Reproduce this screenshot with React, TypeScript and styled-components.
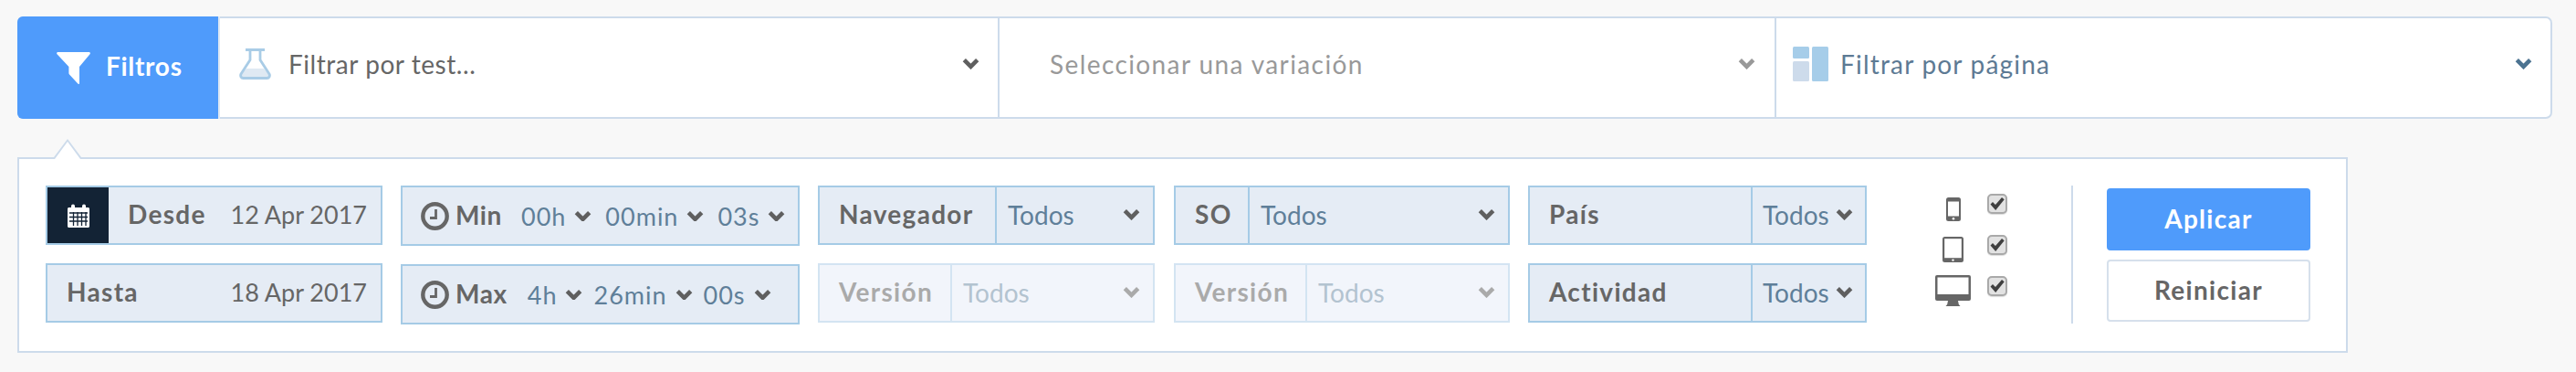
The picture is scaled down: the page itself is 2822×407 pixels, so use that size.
import styled, { createGlobalStyle } from 'styled-components';

const GlobalStyle = createGlobalStyle`
  html, body {
    margin: 0;
    background: #f8f8f8;
    font-family: Lato, "Open Sans", sans-serif;
  }
`;

const Chevron = ({ color = '#5f5f5f', size = 19 }: { color?: string; size?: number }) => (
  <svg width={size} height={size * 0.68} viewBox="0 0 18 12" fill="none" style={{ flexShrink: 0 }}>
    <path d="M2.200 2.400 9 9.200l6.800-6.800" stroke={color} strokeWidth="4.400" />
  </svg>
);

const FilterIcon = () => (
  <svg width="37" height="35" viewBox="0 0 37 35" fill="#fff">
    <path d="M1.500 0h34c1.200 0 1.800 1.300 1 2.200L25 16v18c0 1-1 1.400-1.700.600L14 24.500c-.4-.4-.6-.9-.6-1.400V16L.5 2.200C-.3 1.300.3 0 1.500 0z" />
  </svg>
);

const FlaskIcon = () => (
  <svg width="35" height="34" viewBox="0 0 35 34" fill="none">
    <path d="M8 22h19l6 7c.7 2-.3 4-2 4H3.500c-1.700 0-2.700-2-2-4z" fill="#dfe9f3" />
    <path d="M7 1.500h21M12 2v10.500L2 28c-1 2 0 4.500 2.500 4.500h26c2.500 0 3.500-2.500 2.500-4.500L23 12.500V2" stroke="#a9cce6" strokeWidth="2.800" />
  </svg>
);

const PagesIcon = () => (
  <svg width="39" height="38" viewBox="0 0 39 38">
    <rect x="0" y="0" width="18" height="13" rx="1.500" fill="#a6cde9" />
    <rect x="0" y="16" width="18" height="22" rx="1.500" fill="#cddbeb" />
    <rect x="21" y="0" width="18" height="38" rx="1.500" fill="#a6cde9" />
  </svg>
);

const CalendarIcon = () => (
  <svg width="24" height="26" viewBox="0 0 24 26" fill="#fff">
    <path d="M1.500 4H4V2.500a2 2 0 0 1 4 0V4h8V2.500a2 2 0 0 1 4 0V4h2.500C23.300 4 24 4.700 24 5.500v19c0 .8-.7 1.500-1.500 1.500h-21C.7 26 0 25.300 0 24.500v-19C0 4.700.7 4 1.500 4z" />
    <path d="M2 10h20M2 14.500h20M2 19h20M6.500 9v15M11 9v15M15.500 9v15M20 9v15" stroke="#132335" strokeWidth="1.300" />
  </svg>
);

const ClockIcon = () => (
  <svg width="31" height="31" viewBox="0 0 31 31" fill="none" style={{ flexShrink: 0 }}>
    <circle cx="15.500" cy="15.500" r="13.200" stroke="#666" strokeWidth="4.400" />
    <path d="M16.500 8v9.500H10" stroke="#666" strokeWidth="2.800" />
  </svg>
);

const PhoneIcon = () => (
  <svg width="16" height="26" viewBox="0 0 16 26">
    <rect width="16" height="26" rx="2.500" fill="#666" />
    <rect x="2" y="4.500" width="12" height="16" fill="#fff" />
    <circle cx="8" cy="23.200" r="1.300" fill="#fff" />
  </svg>
);

const TabletIcon = () => (
  <svg width="23" height="28" viewBox="0 0 23 28">
    <rect width="23" height="28" rx="2.500" fill="#666" />
    <rect x="2.200" y="2.200" width="18.600" height="21" fill="#fff" />
    <circle cx="11.500" cy="25.600" r="1.200" fill="#fff" />
  </svg>
);

const MonitorIcon = () => (
  <svg width="39" height="34" viewBox="0 0 39 34">
    <rect width="39" height="28" rx="2" fill="#666" />
    <rect x="2.500" y="2.500" width="34" height="18.500" fill="#fff" />
    <path d="M14 28h11l.8 4 1.700 2h-16l1.700-2z" fill="#666" />
  </svg>
);

const CheckMark = () => (
  <svg width="16" height="14" viewBox="0 0 16 14" fill="#3f3f3f">
    <path d="M.5 7.500 3 5l3 3 7-8 2.700 2.300L6.200 14z" />
  </svg>
);

const Page = styled.div`
  padding: 18px 0 21px 19px;
`;

const TopBar = styled.div`
  width: 2777px;
  height: 112px;
  box-sizing: border-box;
  display: flex;
  background: #fff;
  border: 2px solid #cddbeb;
  border-radius: 7px;
`;

const FilterTab = styled.div`
  width: 222px;
  margin: -2px 0 -2px -2px;
  display: flex;
  align-items: flex-start;
  padding: 39px 0 0 43px;
  box-sizing: border-box;
  gap: 17px;
  background: #4f9bfb;
  border-right: 2px solid #dfe8f3;
  border-radius: 6px 0 0 6px;
  color: #fff;
  font-size: 28px;
  font-weight: 700;
  letter-spacing: 0.7px;
`;

const TabText = styled.span`
  line-height: 30px;
`;

const Segment = styled.div<{ $width: number; $color: string; $pad: number; $gap: number; $end: number; $spacing: number; $first?: boolean }>`
  width: ${(p) => p.$width}px;
  box-sizing: border-box;
  display: flex;
  align-items: center;
  gap: ${(p) => p.$gap}px;
  padding: 0 ${(p) => p.$end}px 9px ${(p) => p.$pad}px;
  border-left: ${(p) => (p.$first ? 'none' : '2px solid #cddbeb')};
  color: ${(p) => p.$color};
  font-size: 28px;
  letter-spacing: ${(p) => p.$spacing}px;
`;

const SegmentText = styled.span`
  flex: 1;
`;

const Panel = styled.div`
  position: relative;
  width: 2553px;
  height: 214px;
  margin-top: 42px;
  box-sizing: border-box;
  display: flex;
  padding: 29px 0 0 29px;
  background: #fff;
  border: 2px solid #cddbeb;

  &::before,
  &::after {
    content: '';
    position: absolute;
    left: 38px;
    width: 0;
    height: 0;
    border-left: 15px solid transparent;
    border-right: 15px solid transparent;
  }

  &::before {
    top: -22px;
    border-bottom: 20px solid #cddbeb;
  }

  &::after {
    top: -19px;
    left: 39px;
    border-left-width: 14px;
    border-right-width: 14px;
    border-bottom: 19px solid #fff;
  }
`;

const Column = styled.div<{ $width: number; $after?: number }>`
  width: ${(p) => p.$width}px;
  margin-right: ${(p) => p.$after ?? 20}px;
  display: flex;
  flex-direction: column;
  gap: 20px;
`;

const Field = styled.div<{ $disabled?: boolean; $tall?: boolean }>`
  height: ${(p) => (p.$tall ? 66 : 65)}px;
  box-sizing: border-box;
  display: flex;
  align-items: center;
  background: ${(p) => (p.$disabled ? '#f2f5fb' : '#e5ecf5')};
  border: 2px solid ${(p) => (p.$disabled ? '#d3e4f2' : '#a5cbe6')};
  font-size: 27px;
  color: #666;
`;

const CalendarCell = styled.div`
  width: 67px;
  align-self: stretch;
  display: flex;
  align-items: center;
  justify-content: center;
  background: #132335;
`;

const DateLabel = styled.span<{ $indent: number }>`
  margin: 0 0 3px ${(p) => p.$indent}px;
  font-size: 28px;
  font-weight: 700;
  letter-spacing: 1.3px;
`;

const DateValue = styled.span`
  margin: 0 15px 2px auto;
  font-size: 27px;
`;

const TimeLabel = styled.span`
  margin: 0 0 3px 7px;
  font-size: 28px;
  font-weight: 700;
  letter-spacing: 0.6px;
`;

const TimeRow = styled.div`
  display: flex;
  align-items: center;
  height: 100%;
  padding-left: 20px;
`;

const TimePart = styled.span<{ $before: number }>`
  display: inline-flex;
  align-items: center;
  gap: 9px;
  margin-left: ${(p) => p.$before}px;
  color: #5f7f99;
  letter-spacing: 1px;
`;

const SelectLabel = styled.div<{ $width: number; $disabled?: boolean }>`
  width: ${(p) => p.$width}px;
  box-sizing: border-box;
  padding: 0 0 3px 21px;
  font-size: 28px;
  font-weight: 700;
  letter-spacing: 1.3px;
  color: ${(p) => (p.$disabled ? '#aaa' : '#666')};
`;

const SelectValue = styled.div<{ $disabled?: boolean; $tight?: boolean }>`
  flex: 1;
  align-self: stretch;
  display: flex;
  align-items: center;
  justify-content: space-between;
  padding: 0 ${(p) => (p.$tight ? 13 : 14)}px 2px ${(p) => (p.$tight ? 11 : 12)}px;
  border-left: 2px solid ${(p) => (p.$disabled ? '#d3e4f2' : '#a5cbe6')};
  color: ${(p) => (p.$disabled ? '#b3c3d0' : '#5f7f99')};
  font-size: 28px;
`;

const Devices = styled.div`
  width: 224px;
  box-sizing: border-box;
  padding: 9px 0 0 75px;
  display: flex;
  flex-direction: column;
`;

const DeviceRow = styled.div`
  height: 45px;
  display: flex;
  align-items: flex-start;
  gap: 18px;
`;

const DeviceIcon = styled.div<{ $top: number }>`
  width: 39px;
  margin-top: ${(p) => p.$top}px;
  display: flex;
  justify-content: center;
`;

const CheckBox = styled.span`
  width: 22px;
  height: 22px;
  box-sizing: border-box;
  display: flex;
  align-items: center;
  justify-content: center;
  background: #e2e2e2;
  border: 2px solid #a9a9a9;
  border-radius: 5px;
  box-shadow: 0 1px 1px #ddd;
`;

const Separator = styled.div`
  width: 2px;
  height: 151px;
  margin-right: 37px;
  background: #cddbeb;
`;

const Buttons = styled.div`
  width: 223px;
  padding-top: 3px;
  display: flex;
  flex-direction: column;
  gap: 10px;
`;

const Button = styled.button<{ $primary?: boolean }>`
  height: 68px;
  padding: 0 0 2px;
  box-sizing: border-box;
  font-family: inherit;
  font-size: 28px;
  font-weight: 700;
  letter-spacing: 1.3px;
  color: ${(p) => (p.$primary ? '#fff' : '#666')};
  background: ${(p) => (p.$primary ? '#4f9bfb' : '#fff')};
  border: 2px solid ${(p) => (p.$primary ? '#4f9bfb' : '#d6e0ec')};
  border-radius: 4px;
`;

const Select = ({ label, value = 'Todos', labelWidth, disabled, tight }: {
  label: string; value?: string; labelWidth: number; disabled?: boolean; tight?: boolean;
}) => (
  <Field $disabled={disabled}>
    <SelectLabel $width={labelWidth} $disabled={disabled}>{label}</SelectLabel>
    <SelectValue $disabled={disabled} $tight={tight}>
      {value}
      <Chevron color={disabled ? '#aaa' : '#5f5f5f'} />
    </SelectValue>
  </Field>
);

const TimeField = ({ label, parts, first, gap }: { label: string; parts: string[]; first: number; gap: number }) => (
  <Field $tall>
    <TimeRow>
      <ClockIcon />
      <TimeLabel>{label}</TimeLabel>
      {parts.map((part, i) => (
        <TimePart key={part} $before={i === 0 ? first : gap}>
          {part}
          <Chevron />
        </TimePart>
      ))}
    </TimeRow>
  </Field>
);

export default function App() {
  return (
    <Page>
      <GlobalStyle />
      <TopBar>
        <FilterTab>
          <FilterIcon />
          <TabText>Filtros</TabText>
        </FilterTab>
        <Segment $first $width={852} $color="#666" $pad={21} $gap={19} $end={20} $spacing={0.55}>
          <FlaskIcon />
          <SegmentText>Filtrar por test...</SegmentText>
          <Chevron />
        </Segment>
        <Segment $width={851} $color="#999" $pad={55} $gap={0} $end={21} $spacing={1.4}>
          <SegmentText>Seleccionar una variación</SegmentText>
          <Chevron color="#999" />
        </Segment>
        <Segment $width={850} $color="#5d7a94" $pad={18} $gap={13} $end={20} $spacing={1.2}>
          <PagesIcon />
          <SegmentText>Filtrar por página</SegmentText>
          <Chevron color="#4c7391" />
        </Segment>
      </TopBar>
      <Panel>
        <Column $width={369}>
          <Field>
            <CalendarCell>
              <CalendarIcon />
            </CalendarCell>
            <DateLabel $indent={21}>Desde</DateLabel>
            <DateValue>12 Apr 2017</DateValue>
          </Field>
          <Field>
            <DateLabel $indent={21}>Hasta</DateLabel>
            <DateValue>18 Apr 2017</DateValue>
          </Field>
        </Column>
        <Column $width={437}>
          <TimeField label="Min" parts={['00h', '00min', '03s']} first={21} gap={15} />
          <TimeField label="Max" parts={['4h', '26min', '00s']} first={22} gap={12} />
        </Column>
        <Column $width={369} $after={21}>
          <Select label="Navegador" labelWidth={192} />
          <Select label="Versión" labelWidth={143} disabled />
        </Column>
        <Column $width={368}>
          <Select label="SO" labelWidth={79} />
          <Select label="Versión" labelWidth={142} disabled />
        </Column>
        <Column $width={371} $after={0}>
          <Select label="País" labelWidth={242} tight />
          <Select label="Actividad" labelWidth={242} tight />
        </Column>
        <Devices>
          <DeviceRow>
            <DeviceIcon $top={4}><PhoneIcon /></DeviceIcon>
            <CheckBox><CheckMark /></CheckBox>
          </DeviceRow>
          <DeviceRow>
            <DeviceIcon $top={2}><TabletIcon /></DeviceIcon>
            <CheckBox><CheckMark /></CheckBox>
          </DeviceRow>
          <DeviceRow>
            <DeviceIcon $top={-1}><MonitorIcon /></DeviceIcon>
            <CheckBox><CheckMark /></CheckBox>
          </DeviceRow>
        </Devices>
        <Separator />
        <Buttons>
          <Button $primary>Aplicar</Button>
          <Button>Reiniciar</Button>
        </Buttons>
      </Panel>
    </Page>
  );
}
